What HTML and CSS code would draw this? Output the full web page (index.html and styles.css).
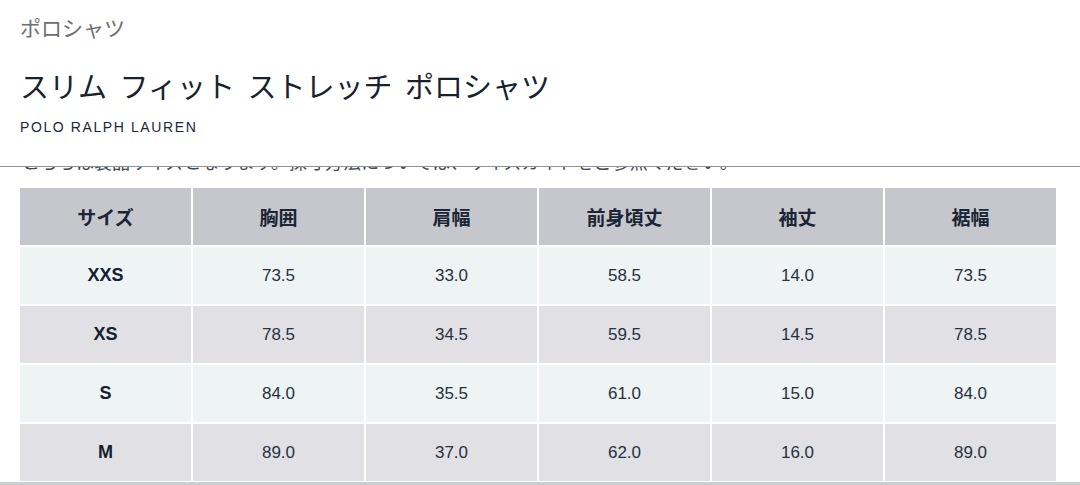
FILE: index.html
```html
<!DOCTYPE html>
<html lang="ja">
<head>
<meta charset="utf-8">
<title>スリム フィット ストレッチ ポロシャツ</title>
<link rel="stylesheet" href="styles.css">
</head>
<body>
<header class="head">
  <div class="crumb">ポロシャツ</div>
  <h1 class="title">スリム フィット ストレッチ ポロシャツ</h1>
  <div class="brand">POLO RALPH LAUREN</div>
</header>
<main class="content">
  <p class="note">こちらは製品サイズとなります。採寸方法については、サイズガイドをご参照ください。</p>
  <div class="chart">
    <div class="cell th">サイズ</div>
    <div class="cell th">胸囲</div>
    <div class="cell th">肩幅</div>
    <div class="cell th">前身頃丈</div>
    <div class="cell th">袖丈</div>
    <div class="cell th">裾幅</div>

    <div class="cell odd size">XXS</div>
    <div class="cell odd">73.5</div>
    <div class="cell odd">33.0</div>
    <div class="cell odd">58.5</div>
    <div class="cell odd">14.0</div>
    <div class="cell odd">73.5</div>

    <div class="cell even size">XS</div>
    <div class="cell even">78.5</div>
    <div class="cell even">34.5</div>
    <div class="cell even">59.5</div>
    <div class="cell even">14.5</div>
    <div class="cell even">78.5</div>

    <div class="cell odd size">S</div>
    <div class="cell odd">84.0</div>
    <div class="cell odd">35.5</div>
    <div class="cell odd">61.0</div>
    <div class="cell odd">15.0</div>
    <div class="cell odd">84.0</div>

    <div class="cell even size">M</div>
    <div class="cell even">89.0</div>
    <div class="cell even">37.0</div>
    <div class="cell even">62.0</div>
    <div class="cell even">16.0</div>
    <div class="cell even">89.0</div>
  </div>
  <div class="bottom-rule"></div>
</main>
</body>
</html>
```
FILE: styles.css
```css
html, body {
  margin: 0;
  padding: 0;
  background: #ffffff;
}
body {
  width: 1080px;
  height: 485px;
  overflow: hidden;
  font-family: "Liberation Sans", "Noto Sans CJK JP", sans-serif;
  color: #1c2838;
}
.head {
  position: relative;
  z-index: 2;
  background: #ffffff;
  height: 167px;
  box-sizing: border-box;
  border-bottom: 1px solid #8f9296;
  padding: 13px 20px 0;
}
.crumb {
  font-family: "Noto Sans CJK JP", sans-serif;
  font-size: 21px;
  line-height: 28px;
  color: #6b6e72;
}
.title {
  margin: 26px 0 0;
  font-family: "Noto Sans CJK JP", sans-serif;
  font-weight: 400;
  font-size: 29px;
  line-height: 36px;
  color: #18222f;
  word-spacing: 6px;
}
.brand {
  margin-top: 16px;
  font-size: 14px;
  letter-spacing: 1.6px;
  line-height: 16px;
  color: #1c2838;
}
.content {
  height: 318px;
  overflow: hidden;
}
.note {
  margin: -19px 0 0 22px;
  font-family: "Noto Sans CJK JP", sans-serif;
  font-size: 18px;
  line-height: 27px;
  color: #444a52;
}
.chart {
  margin: 13px 0 0 20px;
  width: 1036px;
  display: grid;
  grid-template-columns: repeat(6, 171px);
  grid-auto-rows: 57px;
  column-gap: 2px;
  row-gap: 2px;
}
.cell {
  display: flex;
  align-items: center;
  justify-content: center;
  font-size: 17px;
  color: #27313f;
}
.th {
  background: #c6c7cc;
  font-family: "Noto Sans CJK JP", sans-serif;
  font-weight: 700;
  font-size: 19px;
  color: #1a2535;
}
.odd {
  background: #eef3f4;
}
.even {
  background: #e0e0e5;
}
.size {
  font-weight: 700;
  font-size: 18px;
  color: #14202f;
}
.bottom-rule {
  margin-top: 1px;
  height: 4px;
  background: #cdced2;
}
```
